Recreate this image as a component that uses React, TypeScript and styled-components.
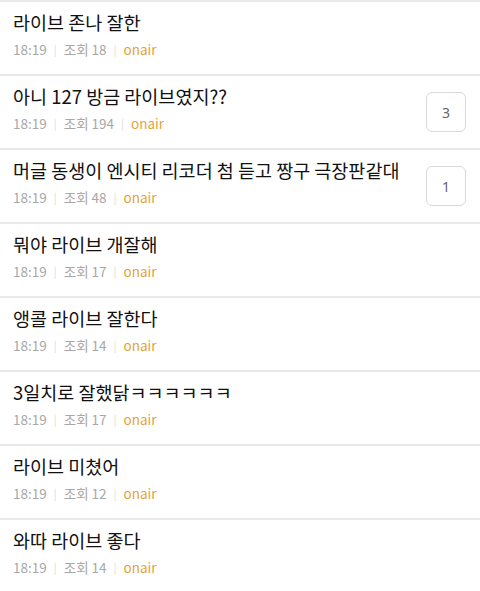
import React from "react";
import styled, { createGlobalStyle } from "styled-components";

const Global = createGlobalStyle`
  html, body { margin: 0; padding: 0; background: #fff; }
  body { font-family: "Noto Sans CJK KR", "Noto Sans", sans-serif; }
`;

const List = styled.ul`
  list-style: none;
  margin: 0;
  padding: 0;
  border-top: 2px solid #e9e9e9;
`;

const Row = styled.li`
  display: flex;
  align-items: center;
  height: 72px;
  padding: 0 14px 0 13px;
  border-bottom: 2px solid #e9e9e9;
  box-sizing: content-box;
`;

const Body = styled.div`
  flex: 1;
  min-width: 0;
  display: flex;
  flex-direction: column;
  padding-bottom: 8px;
`;

const Title = styled.div`
  font-size: 18.5px;
  line-height: 26px;
  color: #111;
  white-space: nowrap;
`;

const Meta = styled.div`
  display: flex;
  align-items: center;
  font-size: 13.5px;
  line-height: 20px;
  margin-top: 4px;
  color: #a8a8a8;
`;

const Sep = styled.span`
  color: #dcdcdc;
  margin: 0 7px;
  font-size: 11px;
`;

const Source = styled.span`
  color: #e3a33b;
`;

const Badge = styled.div`
  width: 40px;
  height: 40px;
  box-sizing: border-box;
  border: 1px solid #d9d9d9;
  border-radius: 6px;
  display: flex;
  align-items: center;
  justify-content: center;
  color: #666;
  font-size: 14px;
  font-family: "Noto Sans", sans-serif;
  flex-shrink: 0;
  margin-left: 8px;
`;

const items = [
  { t: "라이브 존나 잘한", v: 18 },
  { t: "아니 127 방금 라이브였지??", v: 194, c: 3 },
  { t: "머글 동생이 엔시티 리코더 첨 듣고 짱구 극장판같대", v: 48, c: 1 },
  { t: "뭐야 라이브 개잘해", v: 17 },
  { t: "앵콜 라이브 잘한다", v: 14 },
  { t: "3일치로 잘했닭ㅋㅋㅋㅋㅋㅋ", v: 17 },
  { t: "라이브 미쳤어", v: 12 },
  { t: "와따 라이브 좋다", v: 14 },
];

export default function App() {
  return (
    <>
      <Global />
      <List>
        {items.map((it, i) => (
          <Row key={i}>
            <Body>
              <Title>{it.t}</Title>
              <Meta>
                <span>18:19</span>
                <Sep>|</Sep>
                <span>조회 {it.v}</span>
                <Sep>|</Sep>
                <Source>onair</Source>
              </Meta>
            </Body>
            {it.c !== undefined && <Badge>{it.c}</Badge>}
          </Row>
        ))}
      </List>
    </>
  );
}
